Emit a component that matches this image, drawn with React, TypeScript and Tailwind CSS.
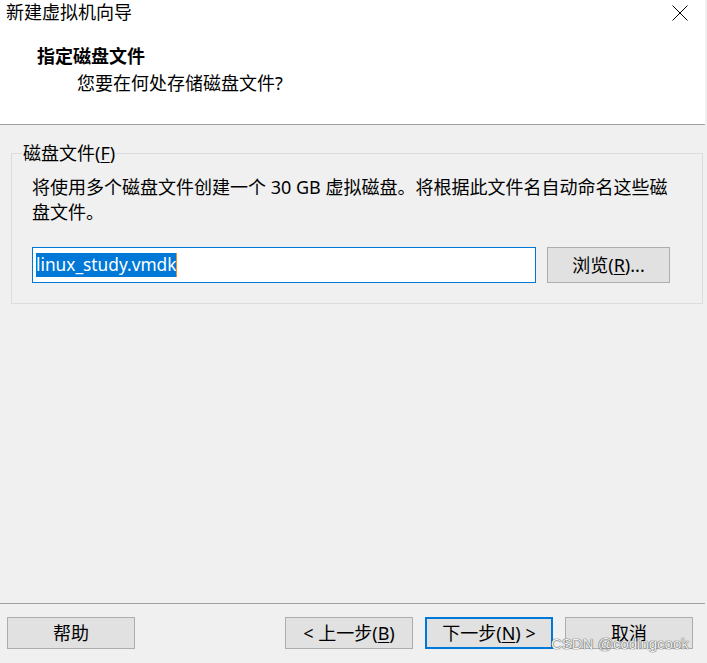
import React from "react";

const FONT = '"Noto Sans", "Noto Sans CJK SC", sans-serif';

function Btn({
  children,
  size = "w-[128px] h-[32px]",
  border = "border border-[#adadad]",
}: {
  children: React.ReactNode;
  size?: string;
  border?: string;
}) {
  return (
    <div
      className={
        "flex items-center justify-center bg-[#e1e1e1] text-[18px] leading-[24px] text-black " + size + " " + border
      }
    >
      {children}
    </div>
  );
}

export default function App() {
  return (
    <div
      className="relative w-[707px] h-[663px] bg-[#f0f0f0] overflow-hidden flex flex-col text-black"
      style={{ fontFamily: FONT }}
    >
      {/* header */}
      <div className="w-[705px] h-[125px] bg-white border-b border-[#a0a0a0] flex flex-col shrink-0">
        <div className="flex items-start justify-between pl-[6px] pr-[17px]">
          <span className="text-[18px] leading-[24px]">新建虚拟机向导</span>
          <svg width="16" height="16" viewBox="0 0 16 16" className="mt-[5px]">
            <path d="M0.5 0.5 L15.5 15.5 M15.5 0.5 L0.5 15.5" stroke="#000" strokeWidth="1" fill="none" />
          </svg>
        </div>
        <div className="pl-[37px] mt-[20px] text-[18px] leading-[24px] font-bold">指定磁盘文件</div>
        <div className="pl-[77px] mt-[3px] text-[18px] leading-[24px]">您要在何处存储磁盘文件?</div>
      </div>

      {/* body */}
      <div className="pl-[11px] pt-[16px]">
        <fieldset className="w-[680px] h-[163px] border border-[#dcdcdc] pl-[10px] pr-[20px] pb-[19px]">
          <legend className="px-[1px] text-[18px] leading-[24px]">
            磁盘文件(<span className="underline underline-offset-2">F</span>)
          </legend>
          <div className="pl-[10px] pt-[10px] text-[18px] leading-[25px] w-[660px]">
            将使用多个磁盘文件创建一个 30 GB 虚拟磁盘。将根据此文件名自动命名这些磁盘文件。
          </div>
          <div className="flex items-start gap-[11px] pl-[10px] mt-[22px]">
            <div className="w-[504px] h-[36px] bg-white border border-[#0078d7] flex items-center pl-[3px]">
              <span className="bg-[#0078d7] text-white text-[17.3px] leading-[24px] whitespace-nowrap">
                linux_study.vmdk
              </span>
              <span className="w-[1px] h-[24px] bg-[#f08a30]" />
            </div>
            <Btn size="w-[123px] h-[36px]">
              浏览(<span className="underline underline-offset-2">R</span>)...
            </Btn>
          </div>
        </fieldset>
      </div>

      <div className="flex-1" />

      {/* footer */}
      <div className="h-[60px] border-t border-[#a0a0a0] w-[705px] shrink-0 flex items-start pt-[13px] pl-[7px] pr-[12px]">
        <Btn>帮助</Btn>
        <div className="flex-1" />
        <div className="flex gap-[12px]">
          <Btn>
            &lt; 上一步(<span className="underline underline-offset-2">B</span>)
          </Btn>
          <Btn border="border-2 border-[#0078d7]">
            下一步(<span className="underline underline-offset-2">N</span>) &gt;
          </Btn>
          <Btn>取消</Btn>
        </div>
      </div>

      {/* watermark */}
      <div
        className="absolute left-[551px] top-[635px] text-[15px] leading-[17px] text-[#f2f2f2] whitespace-nowrap [text-shadow:0_0_1px_#444,0_0_1px_#444]"
        style={{ fontFamily: '"Liberation Sans", Arial, sans-serif' }}
      >
        CSDN @codingcook
      </div>
    </div>
  );
}
